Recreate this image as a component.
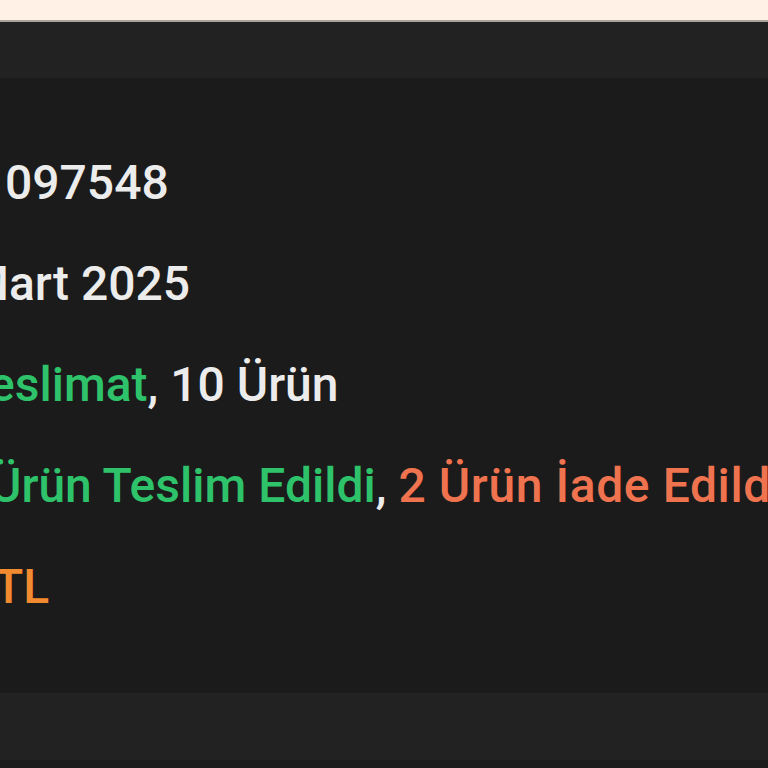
export default function App() {
  return (
    <div className="h-[768px] w-[768px] overflow-hidden bg-[#212121] font-['Roboto',sans-serif]">
      <div className="h-[20px] bg-[#fff1e6]" />
      <div className="h-[2px] bg-[#aaa49f]" />
      <div className="h-[56px] bg-[#222222]" />
      <div className="h-[615px] overflow-hidden bg-[#1b1b1b] pt-[54px] text-[48px] leading-[101px] font-medium whitespace-nowrap text-[#ececec]">
        <div className="ml-[5px]">097548</div>
        <div className="-ml-[33px]">Mart 2025</div>
        <div className="-ml-[38px]">
          <span className="text-[#2ec26a]">Teslimat</span>, 10 Ürün
        </div>
        <div className="-ml-[10px]">
          <span className="text-[#2ec26a]">Ürün Teslim Edildi</span>,{" "}
          <span className="tracking-[0.6px] text-[#f0734f]">2 Ürün İade Edildi</span>
        </div>
        <div className="-ml-[6px] text-[#f28a30]">TL</div>
      </div>
      <div className="h-[67px] bg-[#222222]" />
      <div className="h-[8px] bg-[#1c1c1c]" />
    </div>
  );
}
